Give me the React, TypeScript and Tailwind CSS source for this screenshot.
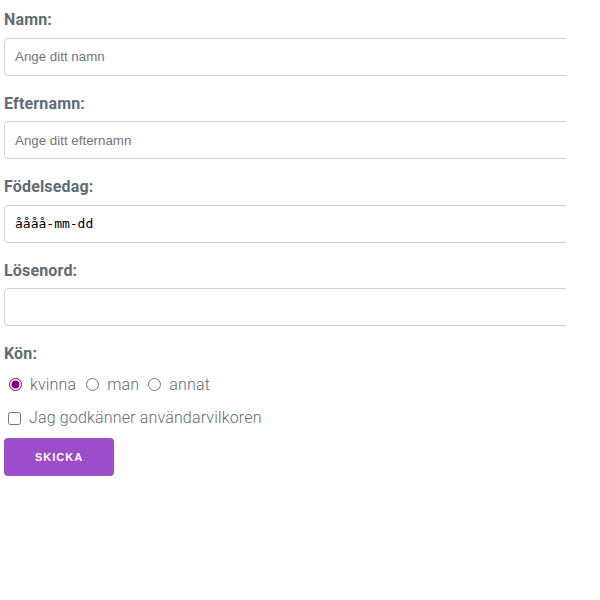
import React from "react";

const labelCls =
  "block text-[16px] font-bold leading-[25.6px] mb-[5px] text-[#606c76] tracking-[0.16px]";
const inputBase =
  "block w-[600px] h-[38px] mb-[15px] px-[10px] py-[6px] border border-[#d1d1d1] rounded-[4px] bg-white outline-none";
const textInputCls =
  inputBase + " text-[13.333px] text-[#222] placeholder:text-[#757575]";

export default function App() {
  return (
    <div
      className="w-[566px] overflow-hidden bg-white px-[4px] pt-[7px] text-[#606c76]"
      style={{ fontFamily: "Roboto, 'Liberation Sans', sans-serif" }}
    >
      <form onSubmit={(e) => e.preventDefault()}>
        <label className={labelCls}>Namn:</label>
        <input
          type="text"
          placeholder="Ange ditt namn"
          className={textInputCls}
          style={{ fontFamily: "'Liberation Sans', Arial, sans-serif" }}
        />
        <label className={labelCls}>Efternamn:</label>
        <input
          type="text"
          placeholder="Ange ditt efternamn"
          className={textInputCls}
          style={{ fontFamily: "'Liberation Sans', Arial, sans-serif" }}
        />
        <label className={labelCls}>Födelsedag:</label>
        <input
          type="text"
          defaultValue="åååå-mm-dd"
          className={inputBase + " text-[13px] text-black"}
          style={{ fontFamily: "'DejaVu Sans Mono', monospace" }}
        />
        <label className={labelCls}>Lösenord:</label>
        <input type="password" className={textInputCls} />
        <label className={labelCls}>Kön:</label>
        <div className="flex items-center h-[25.6px] text-[16px] font-light tracking-[0.16px] text-[#606c76]">
          <input
            type="radio"
            name="kon"
            defaultChecked
            className="w-[13px] h-[13px] ml-[5px] mr-[3px] accent-[#800080]"
          />
          <span className="ml-[5px]">kvinna</span>
          <input
            type="radio"
            name="kon"
            className="w-[13px] h-[13px] ml-[10px] mr-[3px] accent-[#800080]"
          />
          <span className="ml-[5px]">man</span>
          <input
            type="radio"
            name="kon"
            className="w-[13px] h-[13px] ml-[9px] mr-[3px] accent-[#800080]"
          />
          <span className="ml-[5px]">annat</span>
        </div>
        <div className="flex items-center h-[25.6px] mt-[8px] text-[16px] font-light tracking-[0.16px] text-[#606c76]">
          <input
            type="checkbox"
            className="w-[13px] h-[13px] ml-[4px] mr-[3px]"
          />
          <span className="ml-[5px]">Jag godkänner användarvilkoren</span>
        </div>
        <button
          type="submit"
          className="mt-[7px] h-[38px] px-[31px] rounded-[4px] bg-[#9b4dca] text-white text-[11px] font-bold uppercase tracking-[1px] leading-[38px]"
          style={{ fontFamily: "'Liberation Sans', Arial, sans-serif" }}
        >
          Skicka
        </button>
      </form>
    </div>
  );
}
